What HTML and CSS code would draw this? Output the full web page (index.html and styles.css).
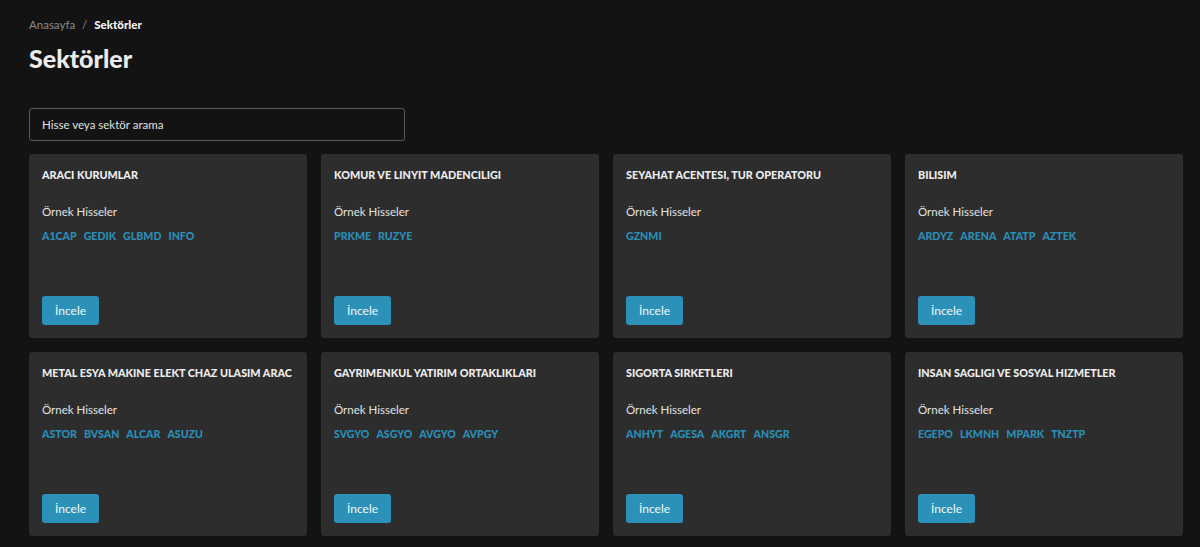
FILE: index.html
```html
<!DOCTYPE html>
<html lang="tr">
<head>
    <meta charset="UTF-8">
    <meta name="viewport" content="width=device-width, initial-scale=1.0">
    <title>Sektörler</title>
    <link rel="stylesheet" href="styles.css">
</head>
<body>
    <div class="page">
        <nav class="breadcrumb">
            <a href="#">Anasayfa</a>
            <span class="sep">/</span>
            <span class="current">Sektörler</span>
        </nav>
        <h1>Sektörler</h1>
        <div class="search">
            <input type="text" placeholder="Hisse veya sektör arama">
        </div>
        <div class="sectors">
            <div class="card">
                <h3>ARACI KURUMLAR</h3>
                <p class="label">Örnek Hisseler</p>
                <div class="tickers"><a href="#">A1CAP</a><a href="#">GEDIK</a><a href="#">GLBMD</a><a href="#">INFO</a></div>
                <button>İncele</button>
            </div>
            <div class="card">
                <h3>KOMUR VE LINYIT MADENCILIGI</h3>
                <p class="label">Örnek Hisseler</p>
                <div class="tickers"><a href="#">PRKME</a><a href="#">RUZYE</a></div>
                <button>İncele</button>
            </div>
            <div class="card">
                <h3>SEYAHAT ACENTESI, TUR OPERATORU</h3>
                <p class="label">Örnek Hisseler</p>
                <div class="tickers"><a href="#">GZNMI</a></div>
                <button>İncele</button>
            </div>
            <div class="card">
                <h3>BILISIM</h3>
                <p class="label">Örnek Hisseler</p>
                <div class="tickers"><a href="#">ARDYZ</a><a href="#">ARENA</a><a href="#">ATATP</a><a href="#">AZTEK</a></div>
                <button>İncele</button>
            </div>
            <div class="card">
                <h3>METAL ESYA MAKINE ELEKT CHAZ ULASIM ARAC</h3>
                <p class="label">Örnek Hisseler</p>
                <div class="tickers"><a href="#">ASTOR</a><a href="#">BVSAN</a><a href="#">ALCAR</a><a href="#">ASUZU</a></div>
                <button>İncele</button>
            </div>
            <div class="card">
                <h3>GAYRIMENKUL YATIRIM ORTAKLIKLARI</h3>
                <p class="label">Örnek Hisseler</p>
                <div class="tickers"><a href="#">SVGYO</a><a href="#">ASGYO</a><a href="#">AVGYO</a><a href="#">AVPGY</a></div>
                <button>İncele</button>
            </div>
            <div class="card">
                <h3>SIGORTA SIRKETLERI</h3>
                <p class="label">Örnek Hisseler</p>
                <div class="tickers"><a href="#">ANHYT</a><a href="#">AGESA</a><a href="#">AKGRT</a><a href="#">ANSGR</a></div>
                <button>İncele</button>
            </div>
            <div class="card">
                <h3>INSAN SAGLIGI VE SOSYAL HIZMETLER</h3>
                <p class="label">Örnek Hisseler</p>
                <div class="tickers"><a href="#">EGEPO</a><a href="#">LKMNH</a><a href="#">MPARK</a><a href="#">TNZTP</a></div>
                <button>İncele</button>
            </div>
        </div>
    </div>
</body>
</html>
```

FILE: styles.css
```css
body {
    margin: 0;
    background-color: #131313;
    color: #e6e6e6;
    font-family: "Lato", "Noto Sans", sans-serif;
    font-size: 12px;
}
.page {
    padding: 18px 17px 0 29px;
}
.breadcrumb {
    display: flex;
    gap: 7px;
    line-height: 14px;
    font-size: 11.5px;
}
.breadcrumb a {
    color: #8a8a8a;
    text-decoration: none;
}
.breadcrumb .sep {
    color: #8a8a8a;
}
.breadcrumb .current {
    color: #f2f2f2;
    font-weight: 900;
}
h1 {
    margin: 12px 0 0;
    font-size: 25px;
    line-height: 28px;
    font-weight: 900;
    color: #ececec;
}
.search {
    margin-top: 36px;
}
.search input {
    box-sizing: border-box;
    width: 376px;
    height: 33px;
    padding: 0 12px;
    background: #131313;
    border: 1px solid #5a5a5a;
    border-radius: 3px;
    color: #e6e6e6;
    font-family: inherit;
    font-size: 11.5px;
}
.search input::placeholder {
    color: #e0e0e0;
}
.sectors {
    margin-top: 13px;
    display: grid;
    grid-template-columns: repeat(4, minmax(0, 1fr));
    gap: 14px;
}
.card {
    box-sizing: border-box;
    height: 184px;
    padding: 13px;
    background: #2d2d2d;
    border-radius: 3px;
    display: flex;
    flex-direction: column;
    align-items: flex-start;
}
.card h3 {
    margin: 0;
    font-weight: 900;
    font-size: 10.8px;
    line-height: 16px;
    color: #eeeeee;
    white-space: nowrap;
}
.label {
    margin: 21px 0 0;
    line-height: 16px;
    font-size: 11.5px;
    color: #e2e2e2;
}
.tickers {
    margin-top: 8px;
    display: flex;
    gap: 7px;
    line-height: 16px;
}
.tickers a {
    font-weight: 900;
    font-size: 10.6px;
    color: #2a8fb8;
    text-decoration: none;
}
button {
    margin-top: auto;
    width: 57px;
    height: 29px;
    background-color: #2b91b8;
    color: #eef7fa;
    border: none;
    border-radius: 3px;
    font-family: inherit;
    font-size: 12px;
    cursor: pointer;
}
button:hover {
    background-color: #257fa2;
}
```
